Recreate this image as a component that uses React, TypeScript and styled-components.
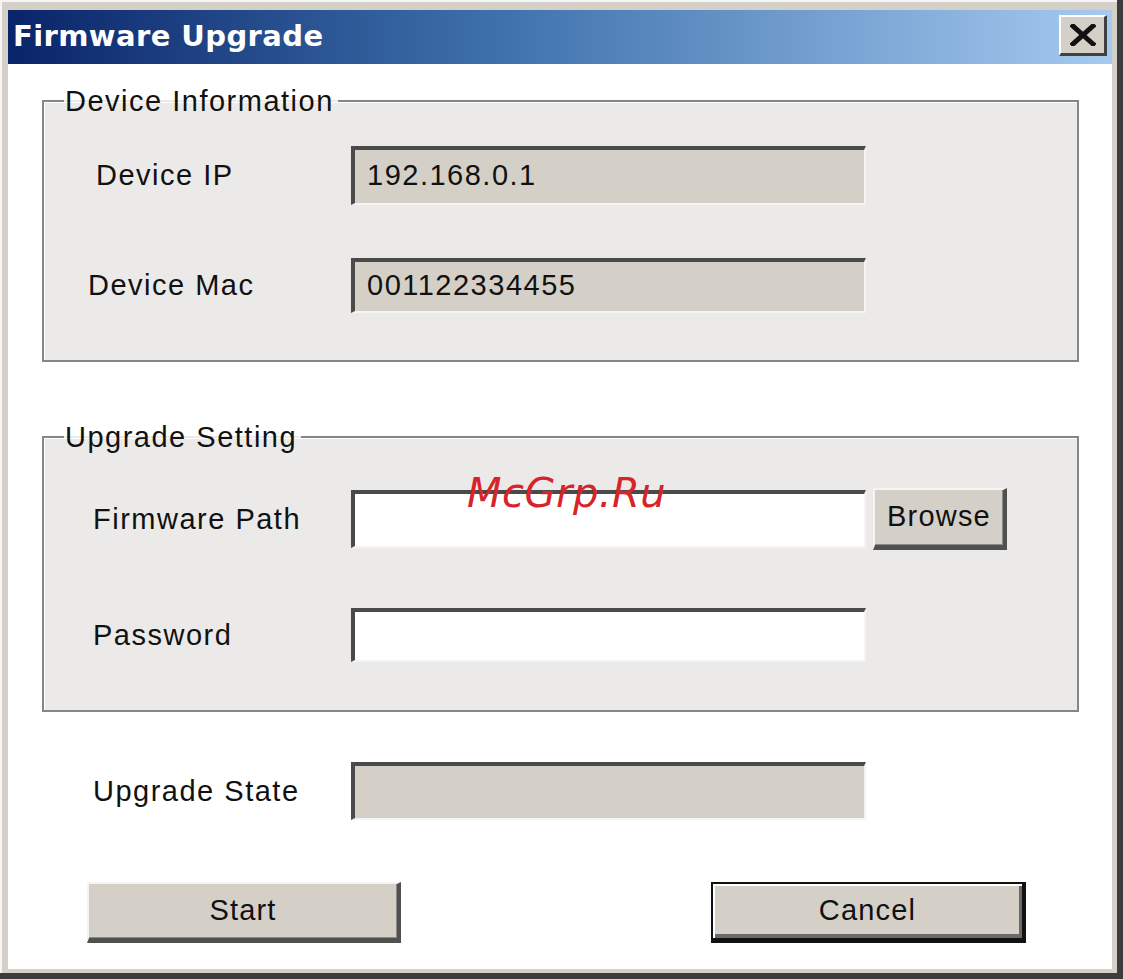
import React from "react";
import styled, { createGlobalStyle } from "styled-components";

const GlobalStyle = createGlobalStyle`
  html, body {
    margin: 0;
    padding: 0;
    background: #ffffff;
  }
  * {
    box-sizing: border-box;
  }
`;

const Window = styled.div`
  width: 1123px;
  height: 979px;
  display: flex;
  flex-direction: column;
  background: #d4d0c8;
  padding: 10px 5px 4px 8px;
  border-right: 6px solid #3c3c3c;
  border-bottom: 6px solid #3c3c3c;
  box-shadow: inset 6px 6px 0 -4px #f4f4f4;
  position: relative;
  font-family: "Liberation Sans", Arial, sans-serif;
  color: #111;
`;

const TitleBar = styled.div`
  height: 54px;
  flex: 0 0 54px;
  display: flex;
  align-items: center;
  justify-content: space-between;
  padding: 0 5px 0 5px;
  background: linear-gradient(to right, #0a246a 0%, #3f72ad 45%, #a6caf0 100%);
`;

const Title = styled.span`
  font-family: "DejaVu Sans", Verdana, sans-serif;
  font-weight: bold;
  font-size: 29px;
  letter-spacing: 0.4px;
  color: #ffffff;
  padding-bottom: 2px;
`;

const CloseButton = styled.button`
  width: 48px;
  height: 41px;
  margin-top: -4px;
  padding: 0;
  display: flex;
  align-items: center;
  justify-content: center;
  background: #d4d0c8;
  border-top: 2px solid #ffffff;
  border-left: 2px solid #ffffff;
  border-right: 3px solid #404040;
  border-bottom: 3px solid #404040;
`;

const Body = styled.div`
  flex: 1;
  background: #ffffff;
  padding: 23px 33px 25px 34px;
  display: flex;
  flex-direction: column;
`;

const Group = styled.fieldset<{ $top: number; $padTop: number; $padBottom: number }>`
  margin: ${(p) => p.$top}px 0 0 0;
  padding: ${(p) => p.$padTop}px 0 ${(p) => p.$padBottom}px 0;
  border: 2px solid #868686;
  box-shadow: inset 1px 1px 0 #ffffff;
  background: #ebeae8;
  min-width: 0;
  display: flex;
  flex-direction: column;
`;

const Legend = styled.legend`
  margin-left: 20px;
  padding: 0 4px 0 1px;
  font-size: 29px;
  line-height: 28px;
  letter-spacing: 1.5px;
`;

const Row = styled.div<{ $labelCol: number; $height: number; $gap?: number }>`
  display: grid;
  grid-template-columns: ${(p) => p.$labelCol}px 515px auto;
  align-items: center;
  height: ${(p) => p.$height}px;
  margin-top: ${(p) => p.$gap || 0}px;
`;

const Label = styled.span<{ $indent: number }>`
  padding-left: ${(p) => p.$indent}px;
  font-size: 29px;
  letter-spacing: 1.5px;
  white-space: nowrap;
`;

const Field = styled.div<{ $readOnly?: boolean; $h: number }>`
  height: ${(p) => p.$h}px;
  display: flex;
  align-items: center;
  padding-left: 12px;
  padding-bottom: 2px;
  background: ${(p) => (p.$readOnly ? "#d4d0c8" : "#ffffff")};
  border-top: 4px solid #4a4a4a;
  border-left: 4px solid #4a4a4a;
  border-right: 2px solid #f4f4f4;
  border-bottom: 2px solid #f4f4f4;
  font-size: 29px;
  letter-spacing: 1.5px;
`;

const PushButton = styled.button<{ $default?: boolean; $w: number; $h: number }>`
  width: ${(p) => p.$w}px;
  height: ${(p) => p.$h}px;
  padding: 0 0 2px 0;
  background: #d4d0c8;
  font-family: "Liberation Sans", Arial, sans-serif;
  font-size: 29px;
  letter-spacing: 1.2px;
  color: #111;
  border-top: 2px solid ${(p) => (p.$default ? "#111" : "#f4f4f4")};
  border-left: 2px solid ${(p) => (p.$default ? "#111" : "#f4f4f4")};
  border-right: 4px solid ${(p) => (p.$default ? "#111" : "#505050")};
  border-bottom: 5px solid ${(p) => (p.$default ? "#111" : "#505050")};
  box-shadow: ${(p) =>
    p.$default ? "inset 2px 2px 0 #ffffff, inset -3px -4px 0 #6a6a6a" : "inset -1px -1px 0 #8a8a8a"};
`;

const BrowseButton = styled(PushButton)`
  margin-left: 7px;
`;

const ButtonRow = styled.div`
  display: flex;
  gap: 310px;
  padding-left: 45px;
  margin-top: 62px;
`;

const Watermark = styled.div`
  position: absolute;
  left: 467px;
  top: 471px;
  font-family: "DejaVu Sans", Verdana, sans-serif;
  font-style: italic;
  font-size: 40px;
  line-height: 44px;
  color: #d8232a;
  letter-spacing: 0.5px;
  pointer-events: none;
`;

const CloseIcon = () => (
  <svg width="26" height="22" viewBox="0 0 26 22">
    <path d="M3 2 L23 20 M23 2 L3 20" stroke="#111" strokeWidth="5" strokeLinecap="square" />
  </svg>
);

export default function App() {
  return (
    <>
      <GlobalStyle />
      <Window>
        <TitleBar>
          <Title>Firmware Upgrade</Title>
          <CloseButton aria-label="Close">
            <CloseIcon />
          </CloseButton>
        </TitleBar>
        <Body>
          <Group $top={0} $padTop={31} $padBottom={47}>
            <Legend>Device Information</Legend>
            <Row $labelCol={307} $height={59}>
              <Label $indent={52}>Device IP</Label>
              <Field $readOnly $h={59}>192.168.0.1</Field>
            </Row>
            <Row $labelCol={307} $height={55} $gap={53}>
              <Label $indent={44}>Device Mac</Label>
              <Field $readOnly $h={55}>001122334455</Field>
            </Row>
          </Group>

          <Group $top={61} $padTop={37} $padBottom={48}>
            <Legend>Upgrade Setting</Legend>
            <Row $labelCol={307} $height={62}>
              <Label $indent={49}>Firmware Path</Label>
              <Field $h={58} />
              <BrowseButton $w={134} $h={62}>Browse</BrowseButton>
            </Row>
            <Row $labelCol={307} $height={54} $gap={58}>
              <Label $indent={49}>Password</Label>
              <Field $h={54} />
            </Row>
          </Group>

          <Row $labelCol={309} $height={58} $gap={50}>
            <Label $indent={51}>Upgrade State</Label>
            <Field $readOnly $h={58} />
          </Row>

          <ButtonRow>
            <PushButton $w={314} $h={61}>Start</PushButton>
            <PushButton $default $w={315} $h={61}>Cancel</PushButton>
          </ButtonRow>
        </Body>
        <Watermark>McGrp.Ru</Watermark>
      </Window>
    </>
  );
}
